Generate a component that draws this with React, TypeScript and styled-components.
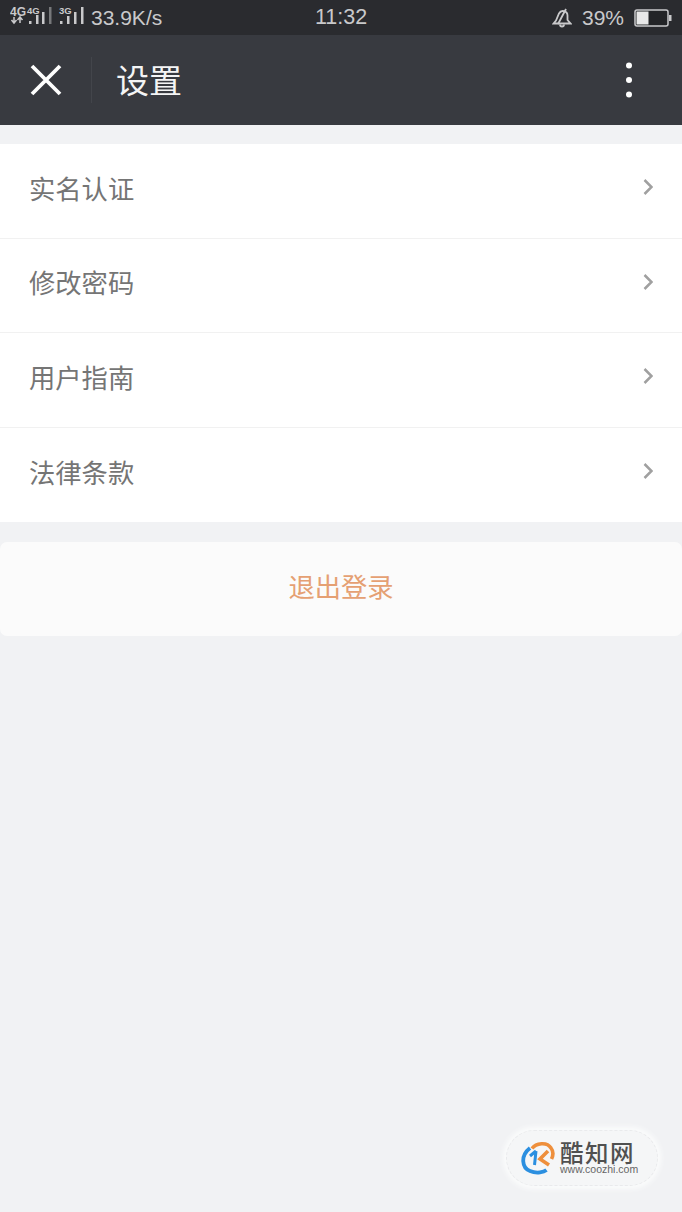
import React from 'react';
import styled, { createGlobalStyle } from 'styled-components';

const GlobalStyle = createGlobalStyle`
  html, body {
    margin: 0;
    padding: 0;
    background: #f1f2f4;
  }
  * {
    box-sizing: border-box;
  }
`;

const Page = styled.div`
  position: relative;
  width: 682px;
  height: 1212px;
  overflow: hidden;
  background: #f1f2f4;
  font-family: 'Noto Sans CJK SC', 'Liberation Sans', sans-serif;
`;

const StatusBar = styled.div`
  height: 35px;
  background: #2a2b2f;
  display: flex;
  align-items: center;
  justify-content: space-between;
  padding: 0 10px 0 10px;
  color: #c9c9cb;
  font-family: 'Liberation Sans', sans-serif;
  font-size: 21px;
`;

const StatusSide = styled.div`
  width: 250px;
  display: flex;
  align-items: center;
  gap: 7px;
`;

const StatusRight = styled(StatusSide)`
  justify-content: flex-end;
  gap: 10px;
`;

const Clock = styled.span`
  font-size: 21.500px;
`;

const NavBar = styled.div`
  height: 90px;
  background: #383a40;
  display: flex;
  align-items: center;
  padding: 0 49px 0 30px;
`;

const NavDivider = styled.div`
  width: 1px;
  height: 46px;
  margin: 0 24px 0 29px;
  background: #43454b;
`;

const NavTitle = styled.div`
  flex: 1;
  color: #f4f4f5;
  font-size: 33px;
  line-height: 44px;
  padding-bottom: 3px;
`;

const MenuList = styled.div`
  margin-top: 19px;
  background: #fff;
`;

const MenuRow = styled.div`
  height: 94.500px;
  display: flex;
  align-items: center;
  justify-content: space-between;
  padding: 0 29px 7px 29px;
  color: #757575;
  font-size: 26.300px;
  &:not(:last-child) {
    border-bottom: 1px solid #f1f1f1;
  }
`;

const LogoutButton = styled.div`
  margin-top: 20px;
  height: 94px;
  padding-bottom: 7px;
  background: #fbfbfb;
  border-radius: 7px;
  display: flex;
  align-items: center;
  justify-content: center;
  color: #e5a073;
  font-size: 26.300px;
`;

const Watermark = styled.div`
  position: absolute;
  left: 506px;
  top: 1130px;
  width: 152px;
  height: 56px;
  border-radius: 28px;
  background: #f5f6f7;
  border: 1px dashed #e9eaec;
  box-shadow: 0 0 5px 3px #fbfcfc;
  display: flex;
  align-items: center;
  padding-left: 14px;
  gap: 5px;
`;

const WatermarkText = styled.div`
  display: flex;
  flex-direction: column;
  color: #505050;
`;

const WatermarkName = styled.span`
  font-size: 23.500px;
  line-height: 23px;
  font-weight: 500;
  letter-spacing: 1.500px;
`;

const WatermarkUrl = styled.span`
  font-family: 'Liberation Sans', sans-serif;
  font-size: 10.500px;
  line-height: 11px;
  color: #666;
`;

const SignalIcons: React.FC = () => (
  <svg width="74" height="24" viewBox="0 0 74 24" fill="#c9c9cb">
    <text x="0" y="9.500" fontSize="12" fontWeight="700" fontFamily="Liberation Sans">4G</text>
    <text x="17" y="8" fontSize="9.500" fontWeight="700" fontFamily="Liberation Sans">4G</text>
    <text x="49" y="8" fontSize="9.500" fontWeight="700" fontFamily="Liberation Sans">3G</text>
    <path d="M4 11v5M1.500 14L4 17L6.500 14M10 17v-5M7.500 14L10 11L12.500 14" fill="none" stroke="#c9c9cb" strokeWidth="1.500" />
    <rect x="19" y="15" width="2.500" height="3" />
    <rect x="26" y="9" width="2.500" height="9" />
    <rect x="32" y="6" width="2.500" height="12" />
    <rect x="39" y="1" width="2.500" height="17" fill="#77787a" />
    <rect x="50" y="15" width="2.500" height="3" />
    <rect x="57" y="10" width="2.500" height="8" />
    <rect x="64" y="6" width="2.500" height="12" />
    <rect x="71" y="1" width="2.500" height="17" />
  </svg>
);

const MuteBell: React.FC = () => (
  <svg width="20" height="20" viewBox="0 0 20 20" fill="none" stroke="#c9c9cb" strokeWidth="1.800">
    <path d="M1.500 15.500h17l-3-3.500V7.500a4.500 4.500 0 0 0-8.500-2L4 12.500z" />
    <path d="M14 1L6 16" />
    <path d="M8 16.500a2 2 0 0 0 4 0" />
  </svg>
);

const Battery: React.FC = () => (
  <svg width="38" height="18" viewBox="0 0 38 18">
    <rect x="1" y="1" width="33" height="16" rx="2" fill="#232427" stroke="#c9c9cb" strokeWidth="1.500" />
    <rect x="2.500" y="2.500" width="12" height="13" fill="#e8e8e8" />
    <rect x="35" y="6" width="2.500" height="6" fill="#c9c9cb" />
  </svg>
);

const CloseIcon: React.FC = () => (
  <svg width="32" height="32" viewBox="0 0 32 32" stroke="#fff" strokeWidth="3.800">
    <path d="M2 2L30 30M30 2L2 30" />
  </svg>
);

const MoreIcon: React.FC = () => (
  <svg width="8" height="36" viewBox="0 0 8 36" fill="#fff">
    <circle cx="4" cy="3.500" r="3" />
    <circle cx="4" cy="18" r="3" />
    <circle cx="4" cy="32.500" r="3" />
  </svg>
);

const Chevron: React.FC = () => (
  <svg width="10" height="16" viewBox="0 0 10 16" fill="none" stroke="#a0a0a0" strokeWidth="2.500">
    <path d="M1.500 1L8.500 8L1.500 15" />
  </svg>
);

const LogoMark: React.FC = () => (
  <svg width="34" height="34" viewBox="0 0 34 34" fill="none">
    <path d="M11 7.500C15 2 26 0.500 30 7C33 11 32 15 30.500 18" stroke="#ee8f3c" strokeWidth="3.600" />
    <path d="M9 7C-1 15 1 27 9 30C16 33 23 31 25.500 29" stroke="#2b8fe0" strokeWidth="3.800" />
    <path d="M15 10L9 15M15 10L13.500 24" stroke="#2b8fe0" strokeWidth="3" />
    <path d="M27 10L19 18L28 24" stroke="#ee8f3c" strokeWidth="3.600" />
  </svg>
);

const menuItems = ['实名认证', '修改密码', '用户指南', '法律条款'];

const App: React.FC = () => (
  <Page>
    <GlobalStyle />
    <StatusBar>
      <StatusSide>
        <SignalIcons />
        <span>33.9K/s</span>
      </StatusSide>
      <Clock>11:32</Clock>
      <StatusRight>
        <MuteBell />
        <span>39%</span>
        <Battery />
      </StatusRight>
    </StatusBar>
    <NavBar>
      <CloseIcon />
      <NavDivider />
      <NavTitle>设置</NavTitle>
      <MoreIcon />
    </NavBar>
    <MenuList>
      {menuItems.map((item) => (
        <MenuRow key={item}>
          {item}
          <Chevron />
        </MenuRow>
      ))}
    </MenuList>
    <LogoutButton>退出登录</LogoutButton>
    <Watermark>
      <LogoMark />
      <WatermarkText>
        <WatermarkName>酷知网</WatermarkName>
        <WatermarkUrl>www.coozhi.com</WatermarkUrl>
      </WatermarkText>
    </Watermark>
  </Page>
);

export default App;
